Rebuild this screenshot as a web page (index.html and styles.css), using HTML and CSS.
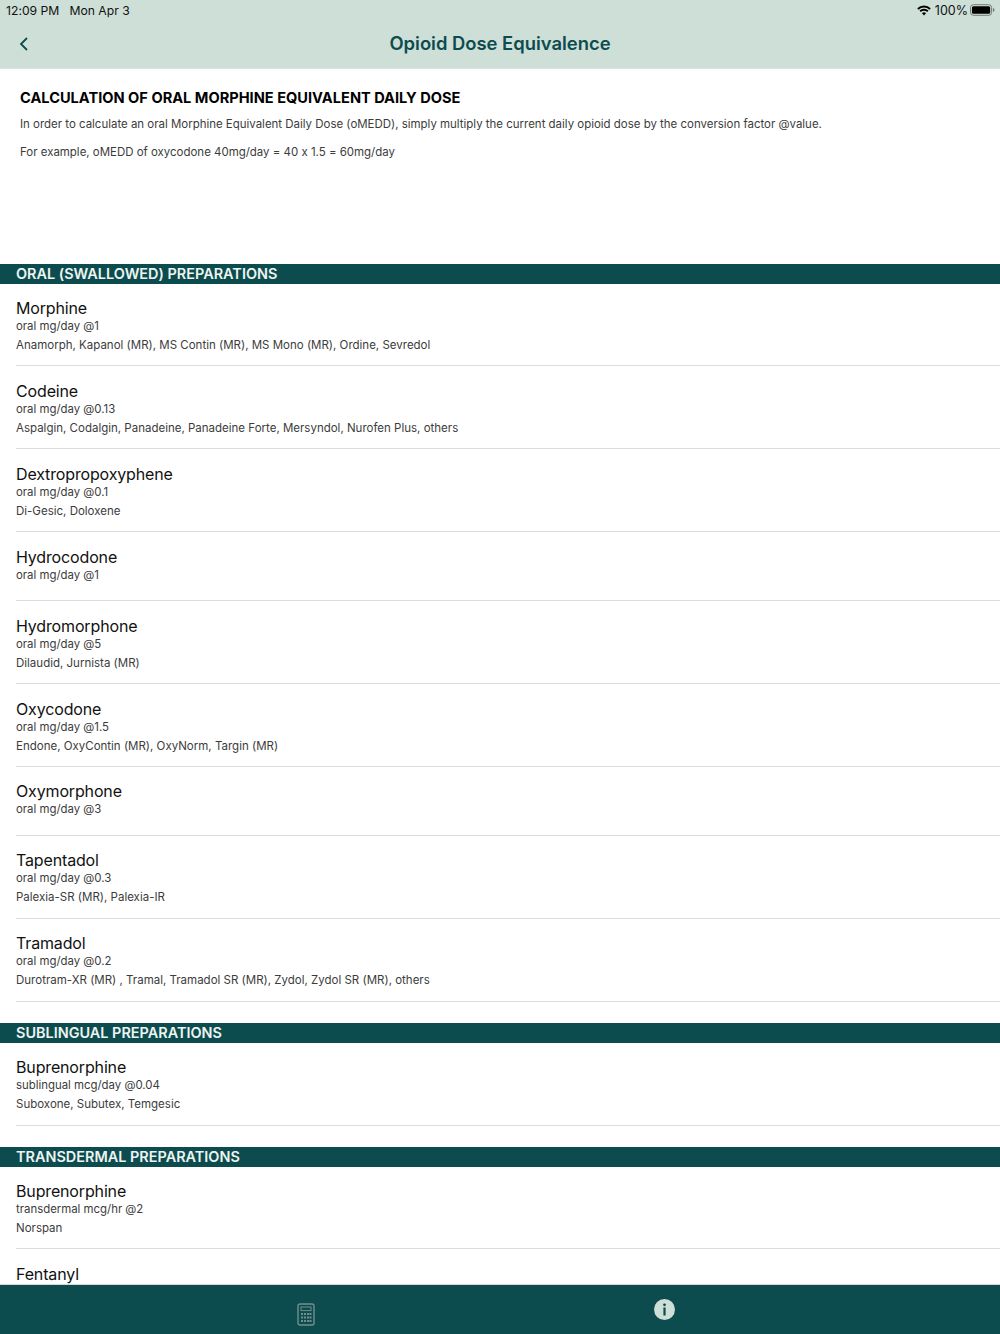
FILE: index.html
```html
<!DOCTYPE html>
<html lang="en">
  <head>
    <meta charset="UTF-8" />
    <meta name="viewport" content="width=device-width, initial-scale=1.0" />
    <title>Opioid Dose Equivalence</title>
    <link rel="stylesheet" href="styles.css">
  </head>
  <body>
    <div class="app">
      <header class="top">
        <div class="status">
          <div class="status-left"><span>12:09 PM</span><span>Mon Apr 3</span></div>
          <div class="status-right">
            <svg class="wifi" width="14" height="11" viewBox="0 0 16 12">
              <path d="M1 4.3a10 10 0 0 1 14 0" fill="none" stroke="#000" stroke-width="2.2"/>
              <path d="M3.6 6.9a6.3 6.3 0 0 1 8.8 0" fill="none" stroke="#000" stroke-width="2.2"/>
              <path d="M8 11.6 5.700 9.200a3.300 3.300 0 0 1 4.600 0z" fill="#000"/>
            </svg>
            <span>100%</span>
            <svg class="battery" width="25" height="12" viewBox="0 0 26 12">
              <rect x="0.5" y="0.5" width="22" height="11" rx="3" fill="none" stroke="#6f7673"/>
              <rect x="2" y="2" width="19" height="8" rx="1.6" fill="#000"/>
              <path d="M24 4v4c.9-.3 1.500-1.100 1.500-2S24.900 4.300 24 4z" fill="#6f7673"/>
            </svg>
          </div>
        </div>
        <nav class="navbar">
          <svg class="back" width="10" height="14" viewBox="0 0 10 14">
            <path d="M8 1 2 7l6 6" fill="none" stroke="#0c4c4e" stroke-width="1.8"/>
          </svg>
          <h1>Opioid Dose Equivalence</h1>
        </nav>
      </header>

      <main class="content">
        <section class="intro">
          <h2>CALCULATION OF ORAL MORPHINE EQUIVALENT DAILY DOSE</h2>
          <p>In order to calculate an oral Morphine Equivalent Daily Dose (oMEDD), simply multiply the current daily opioid dose by the conversion factor @value.</p>
          <p>For example, oMEDD of oxycodone 40mg/day = 40 x 1.5 = 60mg/day</p>
        </section>

        <h3 class="section-title">ORAL (SWALLOWED) PREPARATIONS</h3>
        <ul class="list">
          <li class="item">
            <div class="name">Morphine</div>
            <div class="dose">oral mg/day @1</div>
            <div class="brands">Anamorph, Kapanol (MR), MS Contin (MR), MS Mono (MR), Ordine, Sevredol</div>
          </li>
          <li class="item">
            <div class="name">Codeine</div>
            <div class="dose">oral mg/day @0.13</div>
            <div class="brands">Aspalgin, Codalgin, Panadeine, Panadeine Forte, Mersyndol, Nurofen Plus, others</div>
          </li>
          <li class="item">
            <div class="name">Dextropropoxyphene</div>
            <div class="dose">oral mg/day @0.1</div>
            <div class="brands">Di-Gesic, Doloxene</div>
          </li>
          <li class="item">
            <div class="name">Hydrocodone</div>
            <div class="dose">oral mg/day @1</div>
          </li>
          <li class="item">
            <div class="name">Hydromorphone</div>
            <div class="dose">oral mg/day @5</div>
            <div class="brands">Dilaudid, Jurnista (MR)</div>
          </li>
          <li class="item">
            <div class="name">Oxycodone</div>
            <div class="dose">oral mg/day @1.5</div>
            <div class="brands">Endone, OxyContin (MR), OxyNorm, Targin (MR)</div>
          </li>
          <li class="item">
            <div class="name">Oxymorphone</div>
            <div class="dose">oral mg/day @3</div>
          </li>
          <li class="item">
            <div class="name">Tapentadol</div>
            <div class="dose">oral mg/day @0.3</div>
            <div class="brands">Palexia-SR (MR), Palexia-IR</div>
          </li>
          <li class="item">
            <div class="name">Tramadol</div>
            <div class="dose">oral mg/day @0.2</div>
            <div class="brands">Durotram-XR (MR) , Tramal, Tramadol SR (MR), Zydol, Zydol SR (MR), others</div>
          </li>
        </ul>

        <h3 class="section-title">SUBLINGUAL PREPARATIONS</h3>
        <ul class="list">
          <li class="item">
            <div class="name">Buprenorphine</div>
            <div class="dose">sublingual mcg/day @0.04</div>
            <div class="brands">Suboxone, Subutex, Temgesic</div>
          </li>
        </ul>

        <h3 class="section-title">TRANSDERMAL PREPARATIONS</h3>
        <ul class="list">
          <li class="item">
            <div class="name">Buprenorphine</div>
            <div class="dose">transdermal mcg/hr @2</div>
            <div class="brands">Norspan</div>
          </li>
          <li class="item">
            <div class="name">Fentanyl</div>
          </li>
        </ul>
      </main>

      <footer class="tabbar">
        <div class="tab-calc">
          <svg width="18" height="23" viewBox="0 0 18 23">
            <rect x="1" y="1" width="16" height="21" rx="2" fill="none" stroke="#728f8e" stroke-width="1.4"/>
            <rect x="4" y="4" width="10" height="3.600" fill="none" stroke="#728f8e" stroke-width="1"/>
            <g fill="#728f8e">
              <rect x="4" y="10" width="2" height="2"/><rect x="7" y="10" width="2" height="2"/><rect x="10" y="10" width="2" height="2"/><rect x="12.500" y="10" width="2" height="2"/>
              <rect x="4" y="13.500" width="2" height="2"/><rect x="7" y="13.500" width="2" height="2"/><rect x="10" y="13.500" width="2" height="2"/><rect x="12.500" y="13.500" width="2" height="2"/>
              <rect x="4" y="17" width="2" height="2"/><rect x="7" y="17" width="2" height="2"/><rect x="10" y="17" width="2" height="2"/><rect x="12.500" y="17" width="2" height="2"/>
            </g>
          </svg>
        </div>
        <div class="tab-info">
          <svg width="21" height="21" viewBox="0 0 21 21">
            <circle cx="10.500" cy="10.500" r="10.500" fill="#cddfd7"/>
            <circle cx="10.500" cy="5.800" r="1.400" fill="#0c4c4e"/>
            <rect x="9.400" y="8.500" width="2.200" height="8" fill="#0c4c4e"/>
          </svg>
        </div>
      </footer>
    </div>
  </body>
</html>
```

FILE: styles.css
```css
* {
  box-sizing: border-box;
}
html,
body {
  margin: 0;
  height: 100%;
}
body {
  font-family: Inter, "Liberation Sans", Arial, sans-serif;
  font-feature-settings: "calt" 0;
  background-color: #fff;
  color: #000;
  overflow: hidden;
}
.app {
  display: flex;
  flex-direction: column;
  height: 1334px;
}
.top {
  flex: none;
  height: 69px;
  background-color: #cddfd7;
  border-bottom: 1px solid #d9e4df;
}
.status {
  display: flex;
  justify-content: space-between;
  align-items: center;
  height: 20px;
  padding: 0 5px 0 6px;
  font-size: 12.200px;
  color: #111;
}
.status-left {
  display: flex;
  gap: 10px;
}
.status-right {
  display: flex;
  align-items: center;
  gap: 2px;
  font-size: 12.500px;
}
.wifi {
  margin-right: 2px;
}
.navbar {
  display: flex;
  align-items: center;
  justify-content: center;
  position: relative;
  height: 46px;
}
.back {
  position: absolute;
  left: 19px;
  top: 17px;
}
.navbar h1 {
  margin: 0;
  font-size: 18.400px;
  font-weight: 600;
  color: #0c4c4e;
}
.content {
  flex: 1;
  min-height: 0;
  overflow: hidden;
}
.intro {
  height: 195px;
  padding: 20px 20px 0;
}
.intro h2 {
  margin: 0;
  font-size: 14.600px;
  line-height: 18px;
  font-weight: 700;
}
.intro p {
  margin: 10px 0 0;
  font-size: 11.460px;
  line-height: 18px;
  color: #3c3c3c;
}
.intro h2 + p {
  margin-top: 8px;
}
.section-title {
  margin: 0;
  height: 19.500px;
  padding-left: 16px;
  background-color: #0c4c4e;
  color: #eef4f1;
  font-size: 14.450px;
  line-height: 20px;
  font-weight: 600;
}
.list {
  list-style: none;
  margin: 0 0 21.600px;
  padding: 0;
}
.item {
  min-height: 68.900px;
  margin-left: 16px;
  padding: 14.600px 0 10.400px;
  border-bottom: 1px solid #dcdcdc;
}
.name {
  font-size: 16px;
  letter-spacing: -0.15px;
  line-height: 20px;
  color: #111;
}
.dose {
  margin-top: 1px;
  font-size: 11.400px;
  line-height: 15px;
  color: #3c3c3c;
}
.brands {
  margin-top: 2px;
  font-size: 11.500px;
  line-height: 18.900px;
  color: #3c3c3c;
}
.tabbar {
  flex: none;
  display: flex;
  gap: 339px;
  height: 50px;
  padding-left: 297px;
  background-color: #0c4c4e;
  border-top: 1px solid #d6d6d6;
}
.tab-calc {
  padding-top: 18px;
}
.tab-info {
  padding-top: 14px;
}
```
